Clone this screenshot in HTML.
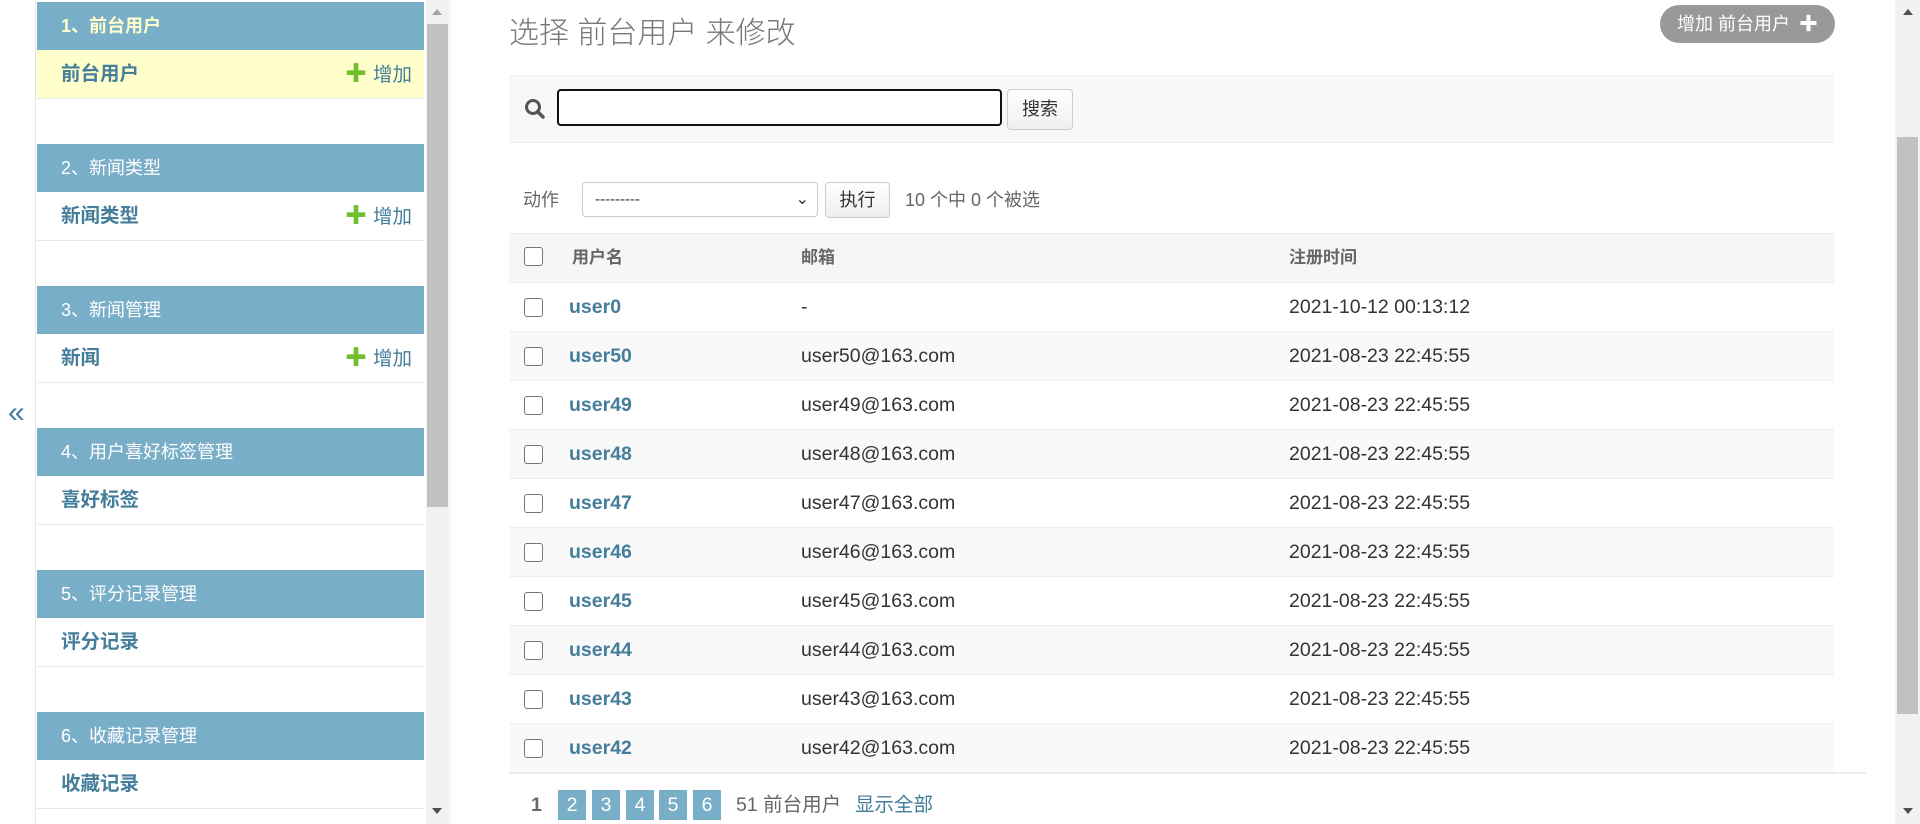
<!DOCTYPE html>
<html><head><meta charset="utf-8">
<style>
*{box-sizing:border-box;margin:0;padding:0}
body{width:1920px;height:824px;overflow:hidden;background:#fff;font-family:"Liberation Sans","Noto Sans CJK SC",sans-serif;color:#333;position:relative;font-size:19.5px}
.abs{position:absolute}
.side{left:35px;top:0;width:416px;height:824px;border-left:1px solid #e6e6e6;border-right:1px solid #eee}
.cap{left:37px;width:387px;height:48px;background:#79aec8;color:#fff;font-size:18px;line-height:48px;padding-left:24px}
.row{left:37px;width:387px;height:49px;border-bottom:1px solid #e8e8e8;line-height:48px;padding-left:24px;font-weight:bold;color:#447e9b;font-size:19.5px}
.add{position:absolute;right:12px;top:0;font-weight:normal;color:#447e9b}
.add b{color:#70bf2b;font-size:22px;margin-right:6px}
.sb{left:426px;top:0;width:23px;height:824px;background:#f1f1f1}
.th{left:509px;width:1325px;height:49px;border-bottom:1px solid #eee}
.cb{position:absolute;left:15px;top:15px;width:19px;height:19px;border:1.5px solid #767676;border-radius:3px;background:#fff}
.c1{position:absolute;left:60px;top:0;line-height:48px;font-weight:bold;color:#447e9b}
.c2{position:absolute;left:292px;top:0;line-height:48px}
.c3{position:absolute;left:780px;top:0;line-height:48px}
.pg{top:790px;width:28px;height:30px;background:#79aec8;color:#fff;text-align:center;line-height:30px;font-size:19.5px}
</style></head><body>
<div class="abs" style="left:8px;top:396px;color:#447e9b;font-size:30px">«</div>
<div class="abs side"></div>
<div class="abs cap" style="top:2px;color:#ffc;font-weight:bold">1、前台用户</div>
<div class="abs row" style="top:50px;background:#ffc">前台用户<span class="add"><b>✚</b>增加</span></div>
<div class="abs cap" style="top:144px">2、新闻类型</div>
<div class="abs row" style="top:192px">新闻类型<span class="add"><b>✚</b>增加</span></div>
<div class="abs cap" style="top:286px">3、新闻管理</div>
<div class="abs row" style="top:334px">新闻<span class="add"><b>✚</b>增加</span></div>
<div class="abs cap" style="top:428px">4、用户喜好标签管理</div>
<div class="abs row" style="top:476px">喜好标签</div>
<div class="abs cap" style="top:570px">5、评分记录管理</div>
<div class="abs row" style="top:618px">评分记录</div>
<div class="abs cap" style="top:712px">6、收藏记录管理</div>
<div class="abs row" style="top:760px">收藏记录</div>
<div class="abs sb"><div style="position:absolute;left:1px;top:24px;width:21px;height:483px;background:#c1c1c1"></div>
<div style="position:absolute;left:6px;top:9px;border:5px solid transparent;border-bottom:6px solid #a3a3a3;border-top:0"></div>
<div style="position:absolute;left:6px;top:808px;border:5px solid transparent;border-top:6px solid #505050;border-bottom:0"></div></div>

<div class="abs" style="left:509px;top:8px;font-size:30px;color:#777;font-weight:300">选择 前台用户 来修改</div>
<div class="abs" style="left:1660px;top:5px;width:175px;height:38px;border-radius:19px;background:#999;color:#fff;font-size:18px;line-height:38px;padding-left:17px">增加 前台用户 <b style="margin-left:4px;font-size:19px">✚</b></div>

<div class="abs" style="left:509px;top:75px;width:1325px;height:68px;background:#f8f8f8;border-top:1px solid #eee;border-bottom:1px solid #eee"></div>
<svg class="abs" style="left:524px;top:98px" width="22" height="22" viewBox="0 0 22 22"><circle cx="9" cy="9" r="6.5" fill="none" stroke="#555" stroke-width="3"/><path d="M13.5 13.5L19 19" stroke="#555" stroke-width="3.5" stroke-linecap="round"/></svg>
<div class="abs" style="left:557px;top:89px;width:445px;height:37px;border:2px solid #111;border-radius:4px;background:#fff"></div>
<div class="abs" style="left:1007px;top:89px;width:66px;height:41px;border:1px solid #ccc;border-radius:4px;background:linear-gradient(#fff,#efefef);text-align:center;line-height:39px;font-size:18px">搜索</div>

<div class="abs" style="left:523px;top:185px;line-height:30px;color:#666;font-size:18px">动作</div>
<div class="abs" style="left:582px;top:182px;width:236px;height:35px;border:1px solid #ccc;border-radius:4px;background:#fff;padding-left:12px;line-height:33px;font-size:15px">---------<span style="position:absolute;right:8px;top:0;font-size:16px">&#8964;</span></div>
<div class="abs" style="left:825px;top:182px;width:65px;height:36px;border:1px solid #ccc;border-radius:4px;background:linear-gradient(#fff,#eee);text-align:center;line-height:34px;font-size:18px">执行</div>
<div class="abs" style="left:905px;top:185px;line-height:30px;color:#666;font-size:18px">10 个中 0 个被选</div>

<div class="abs th" style="top:233px;height:50px;background:#f6f6f6;border-top:1px solid #eee;font-weight:bold;color:#666;font-size:17px">
<div class="cb" style="top:13px"></div><div class="c1" style="color:#666;left:63px;line-height:48px">用户名</div><div class="c2" style="line-height:48px">邮箱</div><div class="c3" style="line-height:48px">注册时间</div></div>

<div class="abs th" style="top:283px"><div class="cb"></div><div class="c1">user0</div><div class="c2">-</div><div class="c3">2021-10-12 00:13:12</div></div>
<div class="abs th" style="top:332px;background:#f9f9f9"><div class="cb"></div><div class="c1">user50</div><div class="c2">user50@163.com</div><div class="c3">2021-08-23 22:45:55</div></div>
<div class="abs th" style="top:381px"><div class="cb"></div><div class="c1">user49</div><div class="c2">user49@163.com</div><div class="c3">2021-08-23 22:45:55</div></div>
<div class="abs th" style="top:430px;background:#f9f9f9"><div class="cb"></div><div class="c1">user48</div><div class="c2">user48@163.com</div><div class="c3">2021-08-23 22:45:55</div></div>
<div class="abs th" style="top:479px"><div class="cb"></div><div class="c1">user47</div><div class="c2">user47@163.com</div><div class="c3">2021-08-23 22:45:55</div></div>
<div class="abs th" style="top:528px;background:#f9f9f9"><div class="cb"></div><div class="c1">user46</div><div class="c2">user46@163.com</div><div class="c3">2021-08-23 22:45:55</div></div>
<div class="abs th" style="top:577px"><div class="cb"></div><div class="c1">user45</div><div class="c2">user45@163.com</div><div class="c3">2021-08-23 22:45:55</div></div>
<div class="abs th" style="top:626px;background:#f9f9f9"><div class="cb"></div><div class="c1">user44</div><div class="c2">user44@163.com</div><div class="c3">2021-08-23 22:45:55</div></div>
<div class="abs th" style="top:675px"><div class="cb"></div><div class="c1">user43</div><div class="c2">user43@163.com</div><div class="c3">2021-08-23 22:45:55</div></div>
<div class="abs th" style="top:724px;background:#f9f9f9;border-bottom:0"><div class="cb"></div><div class="c1">user42</div><div class="c2">user42@163.com</div><div class="c3">2021-08-23 22:45:55</div></div>
<div class="abs" style="left:509px;top:772px;width:1357px;height:2px;background:#eee"></div>

<div class="abs" style="left:531px;top:790px;line-height:30px;font-weight:bold;color:#666">1</div>
<div class="abs pg" style="left:558px">2</div>
<div class="abs pg" style="left:592px">3</div>
<div class="abs pg" style="left:626px">4</div>
<div class="abs pg" style="left:659px">5</div>
<div class="abs pg" style="left:693px">6</div>
<div class="abs" style="left:736px;top:790px;line-height:30px;color:#666">51 前台用户</div>
<div class="abs" style="left:855px;top:790px;line-height:30px;color:#447e9b">显示全部</div>

<div class="abs" style="left:1895px;top:0;width:25px;height:824px;background:#f1f1f1">
<div style="position:absolute;left:2px;top:137px;width:21px;height:577px;background:#c1c1c1"></div>
<div style="position:absolute;left:8px;top:9px;border:5px solid transparent;border-bottom:6px solid #505050;border-top:0"></div>
<div style="position:absolute;left:8px;top:808px;border:5px solid transparent;border-top:6px solid #505050;border-bottom:0"></div></div>
</body></html>
